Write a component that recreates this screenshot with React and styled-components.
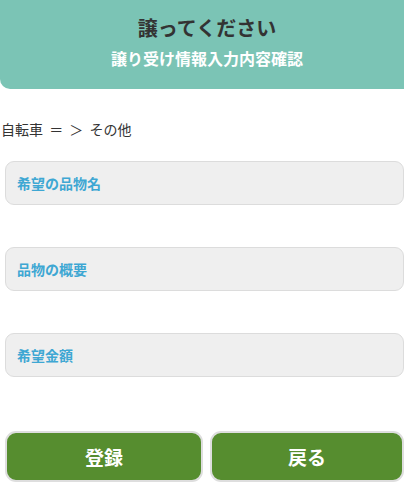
import React from "react";
import styled, { createGlobalStyle } from "styled-components";

const Global = createGlobalStyle`
  html, body { margin: 0; padding: 0; background: #fff; overflow-x: hidden; }
  body { font-family: "Noto Sans CJK JP", "Noto Sans", sans-serif; color: #333; }
  * { box-sizing: border-box; }
`;

const Page = styled.div`
  width: 404px;
  display: flex;
  flex-direction: column;
`;

const Header = styled.header`
  width: 414px;
  height: 89px;
  background: #7bc4b5;
  border-radius: 0 0 10px 10px;
  display: flex;
  flex-direction: column;
  align-items: center;
  padding-top: 13px;
`;

const Title = styled.h1`
  margin: 0;
  font-size: 20px;
  line-height: 30px;
  font-weight: 700;
  color: #333;
`;

const Subtitle = styled.h2`
  margin: 3px 0 0;
  font-size: 16px;
  line-height: 24px;
  font-weight: 700;
  color: #fff;
`;

const Crumb = styled.p`
  margin: 29px 0 0 1px;
  font-size: 14px;
  line-height: 22px;
  color: #333;
  white-space: pre;
  word-spacing: 3px;
`;

const Fields = styled.div`
  margin: 21px 0 0 5px;
  width: 399px;
  display: flex;
  flex-direction: column;
  gap: 42px;
`;

const Field = styled.div`
  height: 44px;
  background: #efefef;
  border: 1px solid #dcdcdc;
  border-radius: 9px;
  display: flex;
  align-items: center;
  padding-left: 11px;
  font-size: 14px;
  font-weight: 700;
  color: #3ea7d3;
`;

const Buttons = styled.div`
  margin: 54px 0 0 5px;
  width: 399px;
  display: grid;
  grid-template-columns: 198px 194px;
  gap: 7px;
`;

const Button = styled.button`
  height: 51px;
  background: #568d2f;
  border: 2px solid #dedede;
  border-radius: 11px;
  color: #fff;
  font-family: inherit;
  font-size: 19px;
  font-weight: 700;
  display: flex;
  align-items: center;
  justify-content: center;
  padding: 0;
  cursor: pointer;
`;

export default function App() {
  return (
    <Page>
      <Global />
      <Header>
        <Title>譲ってください</Title>
        <Subtitle>譲り受け情報入力内容確認</Subtitle>
      </Header>
      <Crumb>自転車 ＝ ＞ その他</Crumb>
      <Fields>
        <Field>希望の品物名</Field>
        <Field>品物の概要</Field>
        <Field>希望金額</Field>
      </Fields>
      <Buttons>
        <Button>登録</Button>
        <Button>戻る</Button>
      </Buttons>
    </Page>
  );
}
